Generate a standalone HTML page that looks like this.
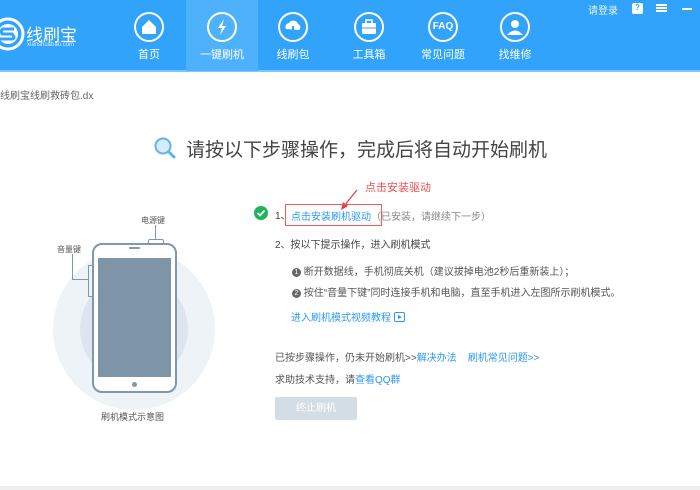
<!DOCTYPE html>
<html><head><meta charset="utf-8"><style>
*{margin:0;padding:0;box-sizing:border-box}
body{width:700px;height:490px;background:#fff;font-family:"Liberation Sans","Noto Sans CJK SC",sans-serif;position:relative;overflow:hidden;color:#555}
.hdr{position:absolute;left:0;top:0;width:700px;height:72px;background:#31a3fb;border-bottom:2px solid #7cc6ff}
.act{position:absolute;left:186px;top:0;width:72px;height:71px;background:#4eb1fc}
.nav{position:absolute;top:0;width:72px;height:72px;text-align:center;color:#fff;font-size:11px}
.nav .c{position:absolute;left:21px;top:12px;width:30px;height:30px;border:2px solid #fff;border-radius:50%}
.nav .l{position:absolute;left:0;top:46px;width:72px}
.a{position:absolute;white-space:nowrap}
.blue{color:#2d98f3}
</style></head><body>
<div class="hdr"></div>
<div class="act"></div>
<svg class="a" style="left:0;top:17px" width="26" height="34" viewBox="0 0 26 34"><circle cx="8" cy="17" r="15" fill="none" stroke="#fff" stroke-width="3"/><circle cx="8" cy="17" r="10" fill="#fff"/><path d="M14 12 H4 Q0 12 2 17 H12 Q16 21 12 22 H0" stroke="#31a3fb" stroke-width="3" fill="none"/></svg>
<div class="a" style="left:26px;top:21px;color:#fff;font-size:17px">线刷宝</div>
<div class="a" style="left:27px;top:42px;color:#e3f2ff;font-size:6px">xianshuabao.com</div>

<div class="nav" style="left:113px"><div class="c"><svg width="26" height="26" viewBox="0 0 26 26"><path d="M6 13 L13 6 L20 13 V20 H6Z" fill="#fff"/></svg></div><div class="l">首页</div></div>
<div class="nav" style="left:186px"><div class="c"><svg width="26" height="26" viewBox="0 0 26 26"><path d="M15 5 L9 14 H13 L11 21 L17 12 H13Z" fill="#fff"/></svg></div><div class="l">一键刷机</div></div>
<div class="nav" style="left:257px"><div class="c"><svg width="26" height="26" viewBox="0 0 26 26"><path d="M6 15 A4 4 0 0 1 9 9 A5 5 0 0 1 18 10 A3.5 3.5 0 0 1 19 16 Z" fill="#fff"/><path d="M13 12 V20 M10 17 L13 20 L16 17" stroke="#31a3fb" stroke-width="2" fill="none"/></svg></div><div class="l">线刷包</div></div>
<div class="nav" style="left:333px"><div class="c"><svg width="26" height="26" viewBox="0 0 26 26"><rect x="6" y="9" width="14" height="11" rx="1" fill="#fff"/><rect x="10" y="6" width="6" height="4" fill="none" stroke="#fff" stroke-width="1.5"/><path d="M6 14 H20" stroke="#31a3fb"/></svg></div><div class="l">工具箱</div></div>
<div class="nav" style="left:407px"><div class="c" style="font-size:10px;font-weight:bold;line-height:26px">FAQ</div><div class="l">常见问题</div></div>
<div class="nav" style="left:479px"><div class="c"><svg width="26" height="26" viewBox="0 0 26 26"><circle cx="13" cy="10" r="4" fill="#fff"/><path d="M5 21 Q13 12 21 21Z" fill="#fff"/></svg></div><div class="l">找维修</div></div>

<div class="a" style="left:588px;top:2px;color:#e3f2ff;font-size:10px">请登录</div>
<div class="a" style="left:632px;top:3px;width:11px;height:11px;background:#fff;border-radius:2px;color:#31a3fb;font-size:8px;text-align:center;font-weight:bold">?</div>
<div class="a" style="left:656px;top:4px;width:11px;height:8px;border-top:2px solid #fff;border-bottom:2px solid #fff"></div>
<div class="a" style="left:656px;top:7px;width:11px;height:2px;background:#fff"></div>
<div class="a" style="left:682px;top:8px;width:10px;height:2px;background:#fff"></div>

<div class="a" style="left:0;top:87px;font-size:10px;color:#666">线刷宝线刷救砖包.dx</div>

<svg class="a" style="left:153px;top:136px" width="24" height="24" viewBox="0 0 24 24"><circle cx="10" cy="10" r="7.5" fill="#d8ecfc" stroke="#5fb3f2" stroke-width="2"/><path d="M15.5 15.5 L21 21" stroke="#5fb3f2" stroke-width="3" stroke-linecap="round"/></svg>
<div class="a" style="left:186px;top:135px;font-size:19px;color:#444">请按以下步骤操作，完成后将自动开始刷机</div>

<div class="a" style="left:53px;top:248px;width:162px;height:162px;border-radius:50%;background:#eef3f7"></div>
<div class="a" style="left:80px;top:275px;width:108px;height:108px;border-radius:50%;background:#dde6ee"></div>
<div class="a" style="left:92px;top:243px;width:85px;height:150px;border:2px solid #7f98ad;border-radius:10px;background:#fff"></div>
<div class="a" style="left:98px;top:258px;width:73px;height:119px;background:#7e95a8"></div>
<div class="a" style="left:129px;top:247px;width:11px;height:2px;background:#7f98ad;border-radius:1px"></div>
<div class="a" style="left:132px;top:382px;width:5px;height:5px;border-radius:50%;background:#7f98ad"></div>
<div class="a" style="left:88px;top:265px;width:4px;height:32px;border:1.5px solid #7f98ad;border-right:none"></div>
<div class="a" style="left:148px;top:239px;width:16px;height:4px;border:1.5px solid #7f98ad;border-bottom:none;border-radius:2px 2px 0 0"></div>
<div class="a" style="left:155px;top:225px;width:1px;height:14px;background:#7f98ad"></div>
<div class="a" style="left:72px;top:254px;width:1px;height:25px;background:#7f98ad"></div>
<div class="a" style="left:72px;top:279px;width:16px;height:1px;background:#7f98ad"></div>
<div class="a" style="left:141px;top:215px;font-size:8px;color:#555">电源键</div>
<div class="a" style="left:57px;top:244px;font-size:8px;color:#555">音量键</div>
<div class="a" style="left:101px;top:410px;font-size:9px;color:#555">刷机模式示意图</div>

<div class="a" style="left:365px;top:179px;font-size:11px;color:#f05050">点击安装驱动</div>
<svg class="a" style="left:338px;top:188px" width="22" height="24" viewBox="0 0 22 24"><path d="M19 2 L6 18" stroke="#e63b3b" stroke-width="1.2"/><path d="M3 22 L5 14 L10 18Z" fill="#e63b3b"/></svg>
<svg class="a" style="left:254px;top:206px" width="14" height="14" viewBox="0 0 14 14"><circle cx="7" cy="7" r="7" fill="#20b35a"/><path d="M3.5 7 L6 9.5 L10.5 4.5" stroke="#fff" stroke-width="1.8" fill="none"/></svg>
<div class="a" style="left:275px;top:207px;font-size:10px;color:#444">1、</div>
<div class="a" style="left:285px;top:204px;width:97px;height:22px;border:1px solid #ef5a5a"></div>
<div class="a" style="left:291px;top:208px;font-size:10px"><span class="blue">点击安装刷机驱动</span><span style="color:#888">（已安装，请继续下一步）</span></div>
<div class="a" style="left:275px;top:236px;font-size:10px;color:#444">2、按以下提示操作，进入刷机模式</div>
<div class="a" style="left:292px;top:263px;font-size:10px;color:#555"><span style="display:inline-block;width:9px;height:9px;border-radius:50%;background:#666;color:#fff;font-size:7px;text-align:center;line-height:9px;vertical-align:1px">1</span> 断开数据线，手机彻底关机（建议拔掉电池2秒后重新装上）；</div>
<div class="a" style="left:292px;top:284px;font-size:10px;color:#555"><span style="display:inline-block;width:9px;height:9px;border-radius:50%;background:#666;color:#fff;font-size:7px;text-align:center;line-height:9px;vertical-align:1px">2</span> 按住“音量下键”同时连接手机和电脑，直至手机进入左图所示刷机模式。</div>
<div class="a blue" style="left:291px;top:309px;font-size:10px">进入刷机模式视频教程 <span style="display:inline-block;width:11px;height:10px;border:1.5px solid #2d98f3;border-radius:2px;vertical-align:-1px;position:relative"><span style="position:absolute;left:3px;top:1.5px;border-left:4px solid #2d98f3;border-top:2.5px solid transparent;border-bottom:2.5px solid transparent"></span></span></div>
<div class="a" style="left:275px;top:349px;font-size:10px;color:#555">已按步骤操作，仍未开始刷机&gt;&gt;<span class="blue">解决办法</span>&nbsp;&nbsp;&nbsp;&nbsp;<span class="blue">刷机常见问题&gt;&gt;</span></div>
<div class="a" style="left:275px;top:371px;font-size:10px;color:#555">求助技术支持，请<span class="blue">查看QQ群</span></div>
<div class="a" style="left:275px;top:397px;width:82px;height:23px;background:#d3dde5;border-radius:2px;color:#fff;font-size:10px;text-align:center;line-height:23px">终止刷机</div>

<div class="a" style="left:0;top:486px;width:700px;height:4px;background:#f0f0f0"></div>
</body></html>
